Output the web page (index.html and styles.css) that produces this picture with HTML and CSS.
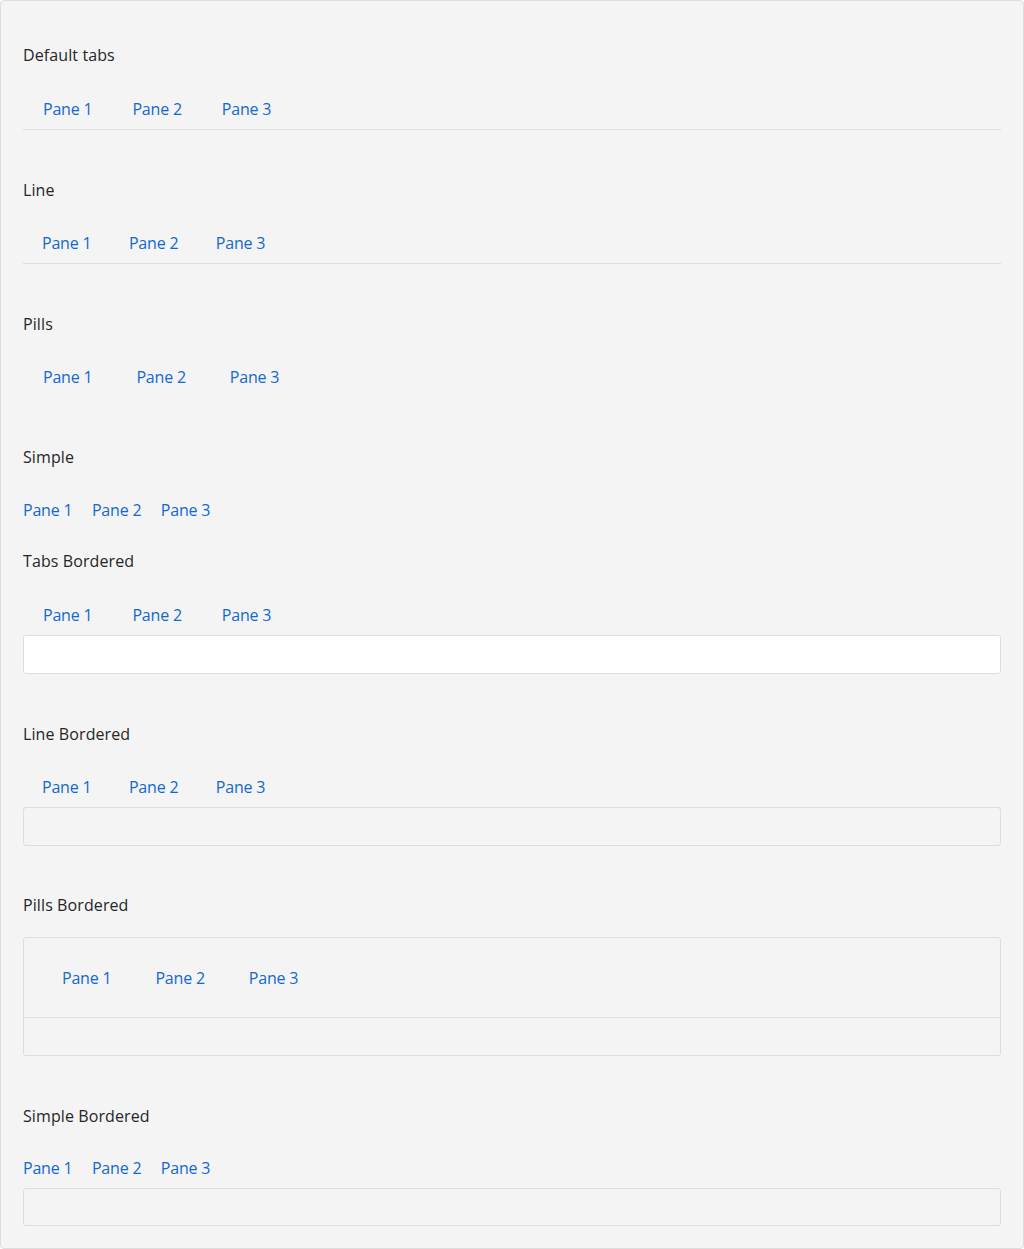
FILE: index.html
```html
<!DOCTYPE html>
<html lang="en">
<head>
<meta charset="utf-8">
<title>Tabs</title>
<link rel="stylesheet" href="styles.css">
</head>
<body>
<div class="page">
  <section class="section s-default">
    <div class="title">Default tabs</div>
    <nav class="tabs tabs-default">
      <a class="tab">Pane 1</a><a class="tab">Pane 2</a><a class="tab">Pane 3</a>
    </nav>
  </section>

  <section class="section s-line">
    <div class="title">Line</div>
    <nav class="tabs tabs-line">
      <a class="tab">Pane 1</a><a class="tab">Pane 2</a><a class="tab">Pane 3</a>
    </nav>
  </section>

  <section class="section s-pills">
    <div class="title">Pills</div>
    <nav class="tabs tabs-pills">
      <a class="tab">Pane 1</a><a class="tab">Pane 2</a><a class="tab">Pane 3</a>
    </nav>
  </section>

  <section class="section s-simple">
    <div class="title">Simple</div>
    <nav class="tabs tabs-simple">
      <a class="tab">Pane 1</a><a class="tab">Pane 2</a><a class="tab">Pane 3</a>
    </nav>
  </section>

  <section class="section s-tabs-bordered">
    <div class="title">Tabs Bordered</div>
    <nav class="tabs tabs-default tabs-nb">
      <a class="tab">Pane 1</a><a class="tab">Pane 2</a><a class="tab">Pane 3</a>
    </nav>
    <div class="panel panel-white"></div>
  </section>

  <section class="section s-line-bordered">
    <div class="title">Line Bordered</div>
    <nav class="tabs tabs-line tabs-nb">
      <a class="tab">Pane 1</a><a class="tab">Pane 2</a><a class="tab">Pane 3</a>
    </nav>
    <div class="panel"></div>
  </section>

  <section class="section s-pills-bordered">
    <div class="title">Pills Bordered</div>
    <div class="pills-box">
      <nav class="tabs tabs-pills pills-box-nav">
        <a class="tab">Pane 1</a><a class="tab">Pane 2</a><a class="tab">Pane 3</a>
      </nav>
      <div class="pills-box-body"></div>
    </div>
  </section>

  <section class="section s-simple-bordered">
    <div class="title">Simple Bordered</div>
    <nav class="tabs tabs-simple">
      <a class="tab">Pane 1</a><a class="tab">Pane 2</a><a class="tab">Pane 3</a>
    </nav>
    <div class="panel panel-sb"></div>
  </section>
</div>
</body>
</html>
```

FILE: styles.css
```css
* { box-sizing: border-box; }

html, body {
  margin: 0;
  padding: 0;
  background: #ffffff;
}

body {
  font-family: "Open Sans", "Noto Sans", sans-serif;
  font-size: 16px;
  line-height: 24px;
  color: #262626;
}

.page {
  width: 1024px;
  height: 1249px;
  background: #f4f4f4;
  border: 1px solid #dddddd;
  border-radius: 4px;
  padding: 42px 22px 22px;
}

.section {
  margin-bottom: 48px;
}

.section:last-child { margin-bottom: 0; }

.title {
  height: 24px;
  margin-bottom: 21px;
  color: #262626;
  letter-spacing: 0.1px;
}

.tabs {
  display: flex;
  align-items: center;
}

.tab {
  display: flex;
  align-items: center;
  color: #1268cf;
  text-decoration: none;
  cursor: pointer;
  white-space: nowrap;
  letter-spacing: -0.2px;
}

/* default tabs */
.tabs-default {
  border-bottom: 1px solid #dddddd;
}
.tabs-default .tab {
  height: 41px;
  padding: 0 20px;
}

/* line tabs */
.tabs-line {
  border-bottom: 1px solid #dddddd;
}
.tabs-line .tab {
  height: 40px;
  padding: 0 19px;
  margin-right: -0.5px;
}

/* pills */
.tabs-pills {
  gap: 4px;
}
.tabs-pills .tab {
  height: 40px;
  padding: 0 20px;
  border-radius: 4px;
}

/* simple */
.tabs-simple {
  gap: 19.5px;
}
.tabs-simple .tab {
  height: 40px;
  padding: 0;
}

.s-simple { margin-bottom: 19px; }

/* bordered variants */
.tabs-nb {
  border-bottom: none;
}
.s-tabs-bordered .title { margin-bottom: 22px; }
.s-tabs-bordered .tabs .tab { height: 40px; }

.panel {
  height: 39px;
  border: 1px solid #dddddd;
  border-radius: 3px;
  background: transparent;
}
.panel-white {
  background: #ffffff;
}
.panel-sb {
  height: 38px;
}

.s-line-bordered { margin-bottom: 47px; }

.s-pills-bordered .title { margin-bottom: 20px; }
.s-simple-bordered .title { margin-bottom: 20px; }

.pills-box {
  border: 1px solid #dddddd;
  border-radius: 3px;
}
.pills-box-nav {
  height: 80px;
  padding: 0 18px;
  border-bottom: 1px solid #dddddd;
}
.pills-box-body {
  height: 37px;
}
```
